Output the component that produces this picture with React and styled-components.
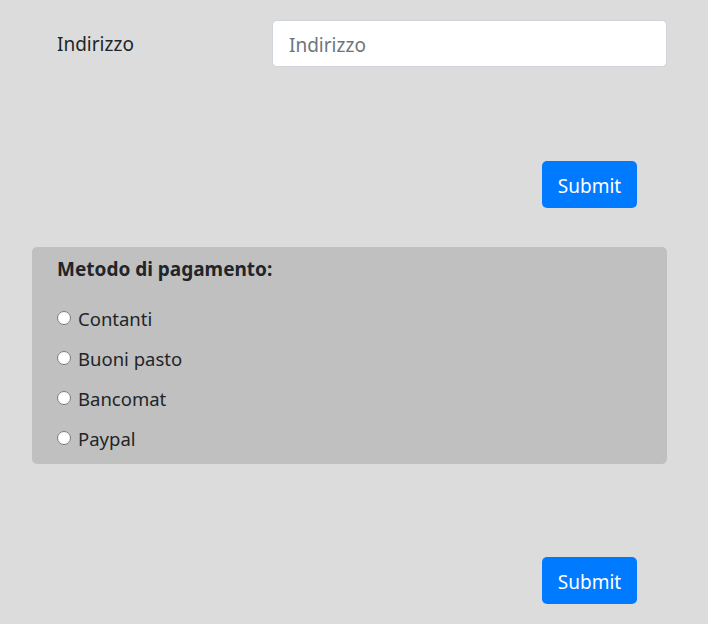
import React from "react";
import styled, { createGlobalStyle } from "styled-components";

const GlobalStyle = createGlobalStyle`
  html, body {
    margin: 0;
    background: #dcdcdc;
  }
  body {
    font-family: "Noto Sans", "Liberation Sans", sans-serif;
    color: #212529;
  }
`;

const Page = styled.div`
  padding: 20px 41px 19px 32px;
`;

const FieldRow = styled.div`
  display: grid;
  grid-template-columns: 240px 1fr;
  align-items: center;
`;

const Label = styled.label`
  padding-left: 25px;
  font-size: 19px;
  line-height: 24px;
`;

const TextInput = styled.input`
  box-sizing: border-box;
  width: 100%;
  height: 47px;
  padding: 9px 16px 7px;
  font-family: inherit;
  font-size: 19px;
  color: #495057;
  background: #fff;
  border: 1px solid #ced4da;
  border-radius: 5px;

  &::placeholder {
    color: #6c757d;
  }
`;

const Actions = styled.div`
  display: flex;
  justify-content: flex-end;
  padding-right: 30px;
  margin-top: ${(p) => p.$top}px;
`;

const Button = styled.button`
  box-sizing: border-box;
  height: 47px;
  width: 95px;
  padding: 3px 0 0;
  font-family: inherit;
  font-size: 19px;
  color: #fff;
  background: #007bff;
  border: none;
  border-radius: 5px;
`;

const Panel = styled.fieldset`
  margin: 39px 0 0;
  padding: 12px 25px 6px;
  border: none;
  background: #c0c0c0;
  border-radius: 5px;
`;

const Legend = styled.div`
  font-size: 19px;
  font-weight: 700;
  line-height: 20px;
  margin-bottom: 19px;
`;

const Option = styled.label`
  display: flex;
  align-items: center;
  height: 40px;
  font-size: 18.5px;
`;

const Radio = styled.input`
  width: 14px;
  height: 14px;
  margin: 0 7px 0 0;
`;

const methods = ["Contanti", "Buoni pasto", "Bancomat", "Paypal"];

export default function App() {
  return (
    <Page>
      <GlobalStyle />
      <FieldRow>
        <Label htmlFor="indirizzo">Indirizzo</Label>
        <TextInput id="indirizzo" placeholder="Indirizzo" />
      </FieldRow>
      <Actions $top={94}>
        <Button>Submit</Button>
      </Actions>
      <Panel>
        <Legend>Metodo di pagamento:</Legend>
        {methods.map((m) => (
          <Option key={m}>
            <Radio type="radio" name="pagamento" value={m} />
            {m}
          </Option>
        ))}
      </Panel>
      <Actions $top={93}>
        <Button>Submit</Button>
      </Actions>
    </Page>
  );
}
